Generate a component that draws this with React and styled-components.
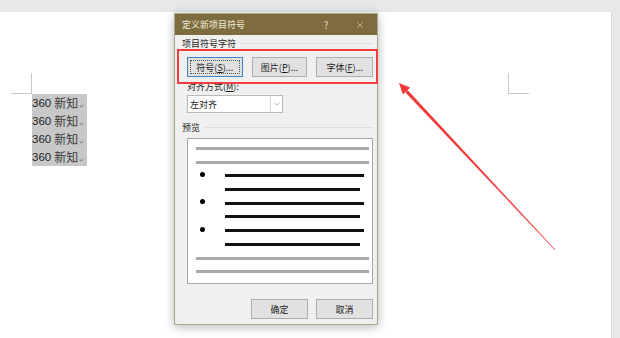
import React from "react";
import styled, { createGlobalStyle } from "styled-components";
import { X, ChevronDown } from "lucide-react";

const GlobalStyle = createGlobalStyle`
  html, body {
    margin: 0;
    padding: 0;
    background: #e8e8e8;
  }
  body {
    font-family: "Noto Sans CJK SC", "Noto Sans", sans-serif;
  }
`;

const Screen = styled.div`
  position: relative;
  width: 620px;
  height: 338px;
  overflow: hidden;
  background: #e8e8e8;
  padding-top: 12px;
  box-sizing: border-box;
`;

const Page = styled.div`
  width: 612px;
  height: 326px;
  background: #fff;
  border-right: 1px solid #d6d6d6;
  box-sizing: border-box;
  display: flex;
  justify-content: space-between;
  padding: 61px 82px 0 11px;
`;

const LeftMargin = styled.div`
  display: flex;
  flex-direction: column;
`;

const CornerMark = styled.div`
  width: 21px;
  height: 21px;
  box-sizing: border-box;
  border-bottom: 1px solid #c9c9c9;
  ${(p) => (p.$side === "left" ? "border-right: 1px solid #c9c9c9;" : "border-left: 1px solid #c9c9c9;")}
`;

const Selection = styled.div`
  margin-left: 21px;
  width: 55px;
  background: #c8c8c8;
`;

const DocLine = styled.div`
  height: 18px;
  display: flex;
  align-items: center;
  color: #333;
  white-space: nowrap;
`;

const Digits = styled.span`
  font-family: "Liberation Sans", Arial, sans-serif;
  font-size: 11.5px;
  color: #222;
  margin-right: 3px;
`;

const Han = styled.span`
  font-family: "Noto Sans CJK SC", sans-serif;
  font-size: 12px;
  line-height: 18px;
  color: #3a3a3a;
`;

const ReturnMark = styled.span`
  font-family: "DejaVu Sans", sans-serif;
  font-size: 6px;
  color: #777;
  margin-left: 1px;
  margin-top: 4px;
`;

const Dialog = styled.div`
  position: absolute;
  left: 174px;
  top: 13px;
  width: 204px;
  height: 312px;
  box-sizing: border-box;
  background: #f0f0f0;
  border: 1px solid #aaa48f;
  box-shadow: 0 2px 10px rgba(0, 0, 0, 0.28);
  display: flex;
  flex-direction: column;
  font-size: 9px;
  color: #1b1b1b;
`;

const TitleBar = styled.div`
  height: 21px;
  background: #7d6c3e;
  color: #f4efdf;
  display: flex;
  align-items: center;
  padding-left: 7px;
  flex-shrink: 0;
`;

const TitleText = styled.div`
  flex: 1;
  font-size: 9px;
`;

const TitleButton = styled.div`
  width: 34px;
  height: 21px;
  display: flex;
  align-items: center;
  justify-content: center;
  font-size: 10px;
  color: #e2dac2;
`;

const Body = styled.div`
  display: flex;
  flex-direction: column;
  padding: 0 4px 0 12px;
`;

const GroupLabel = styled.div`
  display: flex;
  align-items: center;
  height: 11px;
  line-height: 11px;
  margin-left: -5px;
  margin-top: ${(p) => p.$top}px;
  &::after {
    content: "";
    flex: 1;
    height: 1px;
    background: #dedede;
    margin-left: 4px;
  }
`;

const ButtonRow = styled.div`
  display: flex;
  gap: ${(p) => p.$gap || 9}px;
  margin-top: ${(p) => p.$top}px;
  justify-content: ${(p) => (p.$end ? "flex-end" : "flex-start")};
`;

const Button = styled.div`
  width: ${(p) => p.$w || 56}px;
  height: 20px;
  box-sizing: border-box;
  background: #e1e1e1;
  border: 1px solid ${(p) => (p.$focused ? "#3c84c9" : "#adadad")};
  display: flex;
  align-items: center;
  justify-content: center;
  position: relative;
  ${(p) =>
    p.$focused &&
    `&::after {
      content: "";
      position: absolute;
      inset: 2px;
      border: 1px dotted #555;
    }`}
`;

const FieldLabel = styled.div`
  height: 10px;
  line-height: 10px;
  margin-top: 5px;
`;

const Select = styled.div`
  margin-top: 3px;
  width: 96px;
  height: 18px;
  box-sizing: border-box;
  background: #fff;
  border: 1px solid #b9b9b9;
  display: flex;
  align-items: center;
`;

const SelectValue = styled.div`
  flex: 1;
  padding-left: 2px;
`;

const SelectArrow = styled.div`
  width: 11px;
  height: 16px;
  border-left: 1px solid #d4d4d4;
  display: flex;
  align-items: center;
  justify-content: center;
  color: #666;
`;

const Preview = styled.div`
  margin-top: 5px;
  height: 146px;
  box-sizing: border-box;
  background: #fff;
  border: 1px solid #a8a8a8;
  padding-top: 8px;
  display: flex;
  flex-direction: column;
  gap: 10.7px;
`;

const TextRow = styled.div`
  display: flex;
  align-items: center;
  height: 3px;
`;

const Bar = styled.div`
  height: 3px;
  flex: 1;
  margin-left: ${(p) => p.$left}px;
  margin-right: ${(p) => p.$right}px;
  background: ${(p) => (p.$gray ? "#a7a7a7" : "#111")};
`;

const Bullet = styled.div`
  width: 5px;
  height: 5px;
  border-radius: 50%;
  background: #000;
  margin-left: 12px;
  margin-top: -3px;
  flex-shrink: 0;
`;

const Highlight = styled.div`
  position: absolute;
  left: 177px;
  top: 49px;
  width: 201px;
  height: 35px;
  box-sizing: border-box;
  border: 2px solid #f43d3d;
  pointer-events: none;
`;

const Arrow = styled.svg`
  position: absolute;
  left: 390px;
  top: 75px;
`;

const lines = ["360", "360", "360", "360"];

function PreviewLines() {
  return (
    <Preview>
      <TextRow><Bar $gray $left={8} $right={3} /></TextRow>
      <TextRow><Bar $gray $left={8} $right={3} /></TextRow>
      {[0, 1, 2].map((i) => (
        <React.Fragment key={i}>
          <TextRow>
            <Bullet />
            <Bar $left={20} $right={8} />
          </TextRow>
          <TextRow><Bar $left={37} $right={12} /></TextRow>
        </React.Fragment>
      ))}
      <TextRow><Bar $gray $left={8} $right={3} /></TextRow>
      <TextRow><Bar $gray $left={8} $right={3} /></TextRow>
    </Preview>
  );
}

export default function App() {
  return (
    <>
      <GlobalStyle />
      <Screen>
        <Page>
          <LeftMargin>
            <CornerMark $side="left" />
            <Selection>
              {lines.map((n, i) => (
                <DocLine key={i}>
                  <Digits>{n}</Digits>
                  <Han>新知</Han>
                  <ReturnMark>↵</ReturnMark>
                </DocLine>
              ))}
            </Selection>
          </LeftMargin>
          <CornerMark $side="right" />
        </Page>

        <Dialog>
          <TitleBar>
            <TitleText>定义新项目符号</TitleText>
            <TitleButton>?</TitleButton>
            <TitleButton>
              <X size={10} strokeWidth={1.4} />
            </TitleButton>
          </TitleBar>
          <Body>
            <GroupLabel $top={3}>项目符号字符</GroupLabel>
            <ButtonRow $top={8}>
              <Button $focused>符号(<u>S</u>)...</Button>
              <Button>图片(<u>P</u>)...</Button>
              <Button $w={57}>字体(<u>F</u>)...</Button>
            </ButtonRow>
            <FieldLabel>对齐方式(<u>M</u>):</FieldLabel>
            <Select>
              <SelectValue>左对齐</SelectValue>
              <SelectArrow>
                <ChevronDown size={8} strokeWidth={1.5} />
              </SelectArrow>
            </Select>
            <GroupLabel $top={9}>预览</GroupLabel>
            <PreviewLines />
            <ButtonRow $top={15} $gap={8} $end>
              <Button $w={57}>确定</Button>
              <Button $w={57}>取消</Button>
            </ButtonRow>
          </Body>
        </Dialog>

        <Highlight />

        <Arrow width="175" height="185" viewBox="390 75 175 185">
          <polygon points="399,83 410.2,87.6 402.8,94.4" fill="#f23a3a" />
          <polygon points="407.8,90.2 405.2,92.2 555,250.3 555.4,249.8" fill="#f23a3a" />
        </Arrow>
      </Screen>
    </>
  );
}
